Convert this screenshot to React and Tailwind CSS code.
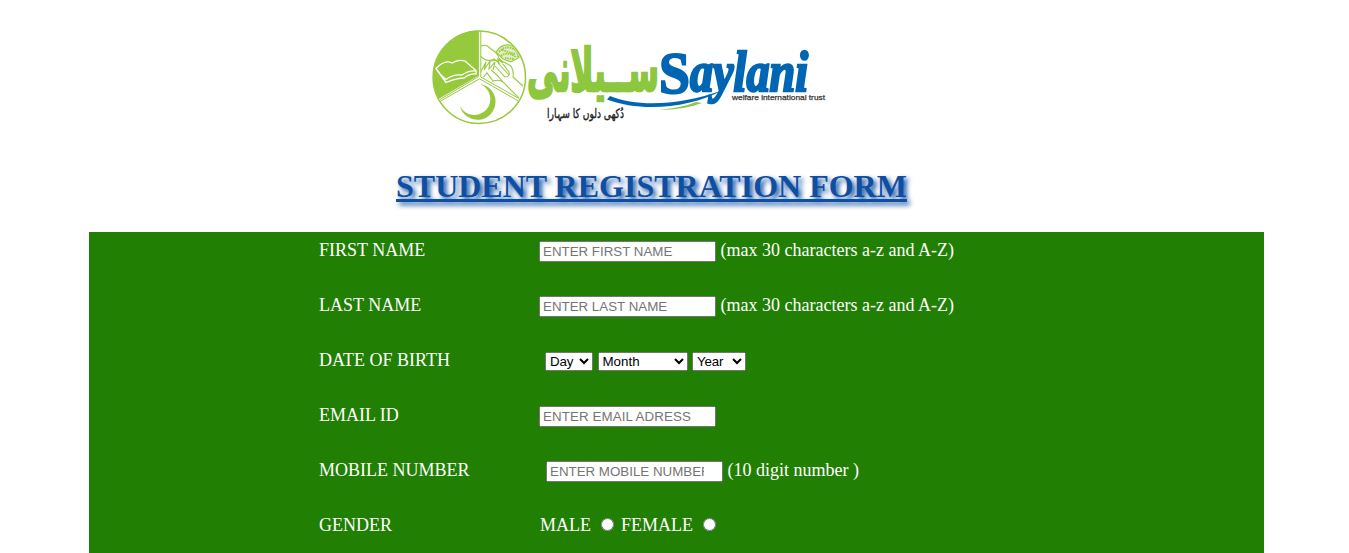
function Logo() {
  return (
    <svg width="400" height="110" viewBox="430 22 400 110" className="block" role="img" aria-label="Saylani">
      <defs>
        <clipPath id="hands"><path d="M481 76V31A46 46 0 0 1 519 98Z" /></clipPath>
      </defs>
      <path d="M478 30.5A46.5 46.5 0 0 0 438.5 99L478 76Z" fill="#97c93d" />
      <circle cx="479.3" cy="77.3" r="46.2" fill="none" stroke="#97c93d" strokeWidth="1.5" />
      <g fill="none" stroke="#97c93d" strokeWidth="1">
        <path d="M478.6 31V76.500L440 99.500M480.800 31V77L519 98.500M440 101.400L479.500 78.800L518 100.800" />
      </g>
      <g fill="none" stroke="#fff" strokeWidth="1.3" strokeLinejoin="round">
        <path d="M436 68.500L446 82.500Q457 78 464 78Q470 73.500 476 74V70.500L465 61Q458 59 452 63Q445 59 436 68.500Z" />
        <path d="M436 68.500Q440 75 446 79.500Q453 74 462 75Q469 70 476 71" />
      </g>
      <path d="M480 84A18 18 0 1 1 460 106A16 16 0 1 0 480 84Z" fill="#97c93d" />
      <g clipPath="url(#hands)" fill="none" stroke="#97c93d" strokeWidth="1.1">
        <path d="M480 46.500Q485 44 488 46.500L495 52Q498 54 499 58L503 63L498 59L499 63L494 59Q489 62 484 59L480 56" />
        <path d="M480 73L486 62L484 70L490 61L489 69L495 62L493 70M490 61L500 60L511 66Q514 71 513 77L524 87" />
        <path d="M491 70Q498 75 503 82L521 100M498 63L509 75M495 66L505 77Q510 77 509 72L503 64M481 80L487 73L493 81Q499 79 503 82" />
        <path d="M496 52Q501 44 509 45Q519 47 520 57L511 62L503 59Z" fill="#97c93d" fillOpacity="0.3" />
        <path d="M499 52Q504 46 511 48Q518 50 518 57M501 56Q507 51 516 57M505 58L514 59M502 50L515 54" strokeWidth="1.900" strokeDasharray="1.5 0.9" />
      </g>
      <text transform="translate(527 91) scale(1 1.3)" direction="ltr" fontSize="46" textLength="132" lengthAdjust="spacingAndGlyphs" fill="#8dc63f" stroke="#8dc63f" strokeWidth="2" className="font-['DejaVu_Sans',sans-serif] font-bold">ســیلانی</text>
      <text x="547" y="118" direction="ltr" fontSize="13" textLength="77" lengthAdjust="spacingAndGlyphs" fill="#222" stroke="#222" strokeWidth="0.4" className="font-['DejaVu_Sans',sans-serif]">دُکھی دلوں کا سہارا</text>
      <text x="659" y="93" fontSize="60" textLength="31" lengthAdjust="spacingAndGlyphs" fill="#0066b3" stroke="#0066b3" strokeWidth="2" className="font-['Liberation_Serif',serif] font-bold">S</text>
      <text transform="translate(690 91) scale(1 1.12)" fontSize="50" textLength="118" lengthAdjust="spacingAndGlyphs" fill="#0066b3" stroke="#0066b3" strokeWidth="2.3" className="font-['Liberation_Serif',serif] font-bold italic">aylani</text>
      <path d="M610 96C638 107 678 106 723 90C688 109 640 112 607 99.500Z" fill="#0066b3" />
      <path d="M659 110Q683 107.500 696 102L702 103Q684 110 659 110Z" fill="#8dc63f" />
      <text x="732" y="100" fontSize="8" textLength="93" lengthAdjust="spacingAndGlyphs" fill="#333" stroke="#333" strokeWidth="0.25" className="font-['Liberation_Sans',sans-serif]">welfare international trust</text>
    </svg>
  );
}

const inputClass = "[all:revert] w-[177px]! h-[21px]! box-border! placeholder:text-[#757575]";

function Row({ label, children }) {
  return (
    <div className="flex h-[55px] items-start">
      <div className="w-[220px] pt-[8px]">{label}</div>
      <div className="pt-[8px] whitespace-pre">{children}</div>
    </div>
  );
}

function Picker({ options, className }) {
  return <select className={className}>{options.map((o) => <option key={o}>{o}</option>)}</select>;
}

export default function App() {
  return (
    <div className="h-[553px] overflow-hidden bg-white font-['Liberation_Serif',serif]">
      <header className="h-[232px] pt-[22px]">
        <div className="ml-[430px]"><Logo /></div>
        <h1 className="mt-[36px] ml-[396px] w-max text-[32px] leading-[37px] font-bold text-[#0f4fa2] underline [text-shadow:3px_3px_5px_#0f4fa2]">STUDENT REGISTRATION FORM</h1>
      </header>
      <form className="ml-[89px] h-[330px] w-[1175px] bg-[#218003] pl-[230px] text-[18px] leading-[21px] text-white">
        <Row label="FIRST NAME"><input className={inputClass} placeholder="ENTER FIRST NAME" /> (max 30 characters a-z and A-Z)</Row>
        <Row label="LAST NAME"><input className={inputClass} placeholder="ENTER LAST NAME" /> (max 30 characters a-z and A-Z)</Row>
        <Row label="DATE OF BIRTH">
          <div className="pl-[6px]">
            <Picker className="[all:revert] w-[48px]! tracking-[-0.2px]!" options={["Day", "1", "2", "3"]} />{" "}
            <Picker className="[all:revert] w-[90px]!" options={["Month", "January", "February", "March"]} />{" "}
            <Picker className="[all:revert] w-[54px]! tracking-[-0.2px]!" options={["Year", "2000", "2001", "2002"]} />
          </div>
        </Row>
        <Row label="EMAIL ID"><input className={`${inputClass} tracking-[0.1px]!`} placeholder="ENTER EMAIL ADRESS" /></Row>
        <Row label="MOBILE NUMBER">
          <div className="pl-[7px]"><input className={`${inputClass} pr-[17px]!`} placeholder="ENTER MOBILE NUMBER" /> (10 digit number )</div>
        </Row>
        <Row label="GENDER">
          <div className="pl-px">MALE <input type="radio" name="gender" className="[all:revert]" /> FEMALE <input type="radio" name="gender" className="[all:revert]" /></div>
        </Row>
      </form>
    </div>
  );
}
